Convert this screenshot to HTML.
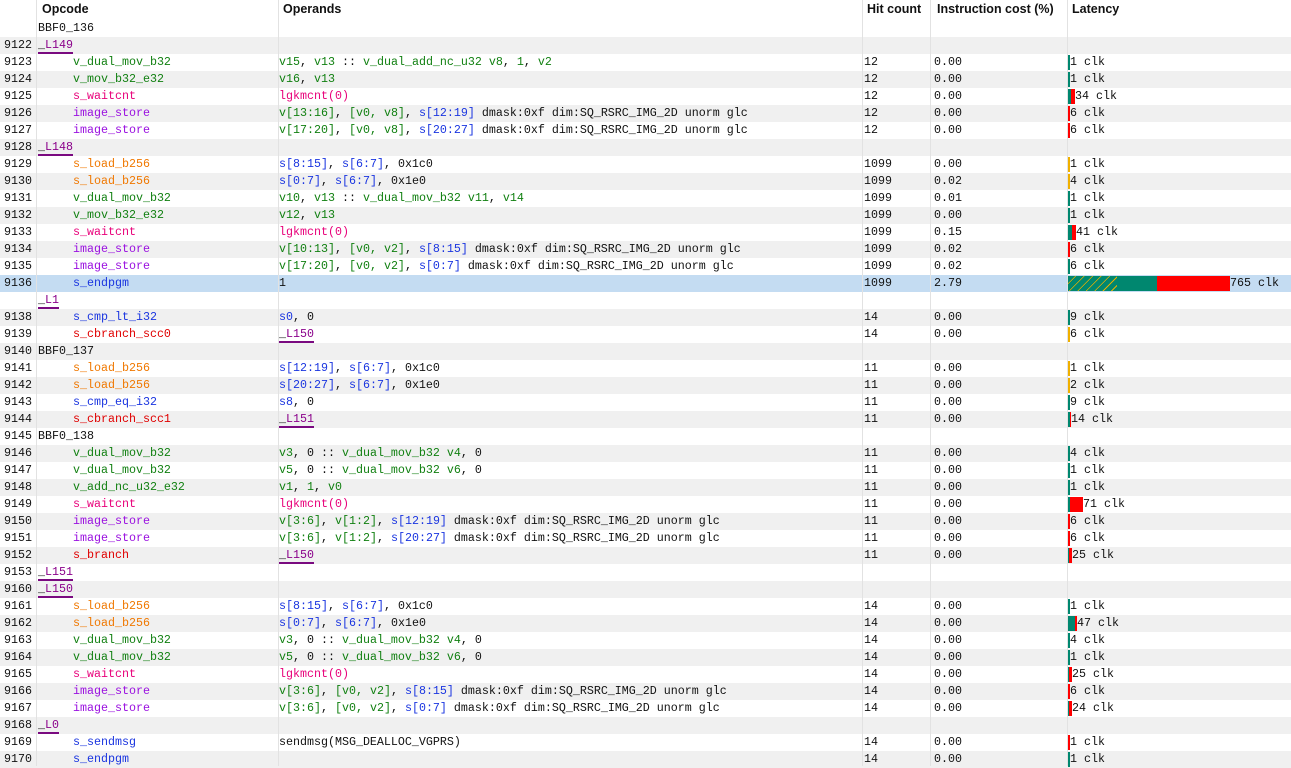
<!DOCTYPE html>
<html><head><meta charset="utf-8"><style>
*{margin:0;padding:0;box-sizing:border-box}
body{width:1291px;height:766px;overflow:hidden;background:#fff;font-family:"Liberation Mono",monospace;font-size:11.67px;color:#111;position:relative}
.hd{position:absolute;top:0;left:0;width:1291px;height:20px;font-family:"Liberation Sans",sans-serif;font-weight:bold;font-size:12.5px}
.hd span{position:absolute;top:2px}
.vl{position:absolute;top:0;height:766px;width:1px;background:#e2e2e2}
.r{position:absolute;left:0;width:1291px;height:17px;line-height:17px;white-space:pre}
.g{background:#f0f0f0}
.sel{background:#c4dcf2}
.r>span{position:absolute;top:0}
.n{left:4px}.lb{left:38px}.o{left:73px}.p{left:279px}.h{left:864px}.c{left:934px}.l{left:1068px;display:flex;align-items:center;height:17px}
.lab{border-bottom:2px solid #7a0a80;line-height:14px;display:inline-block}
.V{color:#118011}.S{color:#1a35e0}.K{color:#e8007a}.P{color:#9a10e0}.O{color:#f07800}.R{color:#e00000}.LB{color:#8a008a}
.b{display:inline-block;height:15px}
.t{background:#00876f}.rd{background:#ff0000}.y{background:#f0b000}
.hat{background:repeating-linear-gradient(135deg,#00876f 0 5px,#e8b000 5px 6px)}
</style></head><body>
<div class="hd"><span style="left:42px">Opcode</span><span style="left:283px">Operands</span><span style="left:867px">Hit count</span><span style="left:937px">Instruction cost (%)</span><span style="left:1072px">Latency</span></div>

<div class="r" style="top:20px"><span class="lb">BBF0_136</span></div>
<div class="r g" style="top:37px"><span class="n">9122</span><span class="lb"><span class="lab">_<span class="LB">L149</span></span></span></div>
<div class="r" style="top:54px"><span class="n">9123</span><span class="o V">v_dual_mov_b32</span><span class="p"><span class="V">v15</span>, <span class="V">v13</span> :: <span class="V">v_dual_add_nc_u32 v8</span>, <span class="V">1</span>, <span class="V">v2</span></span><span class="h">12</span><span class="c">0.00</span><span class="l"><i class="b t" style="width:2px"></i>1 clk</span></div>
<div class="r g" style="top:71px"><span class="n">9124</span><span class="o V">v_mov_b32_e32</span><span class="p"><span class="V">v16</span>, <span class="V">v13</span></span><span class="h">12</span><span class="c">0.00</span><span class="l"><i class="b t" style="width:2px"></i>1 clk</span></div>
<div class="r" style="top:88px"><span class="n">9125</span><span class="o K">s_waitcnt</span><span class="p K">lgkmcnt(0)</span><span class="h">12</span><span class="c">0.00</span><span class="l"><i class="b t" style="width:3px"></i><i class="b rd" style="width:4px"></i>34 clk</span></div>
<div class="r g" style="top:105px"><span class="n">9126</span><span class="o P">image_store</span><span class="p"><span class="V">v[13:16]</span>, <span class="V">[v0, v8]</span>, <span class="S">s[12:19]</span> dmask:0xf dim:SQ_RSRC_IMG_2D unorm glc</span><span class="h">12</span><span class="c">0.00</span><span class="l"><i class="b rd" style="width:2px"></i>6 clk</span></div>
<div class="r" style="top:122px"><span class="n">9127</span><span class="o P">image_store</span><span class="p"><span class="V">v[17:20]</span>, <span class="V">[v0, v8]</span>, <span class="S">s[20:27]</span> dmask:0xf dim:SQ_RSRC_IMG_2D unorm glc</span><span class="h">12</span><span class="c">0.00</span><span class="l"><i class="b rd" style="width:2px"></i>6 clk</span></div>
<div class="r g" style="top:139px"><span class="n">9128</span><span class="lb"><span class="lab">_<span class="LB">L148</span></span></span></div>
<div class="r" style="top:156px"><span class="n">9129</span><span class="o O">s_load_b256</span><span class="p"><span class="S">s[8:15]</span>, <span class="S">s[6:7]</span>, 0x1c0</span><span class="h">1099</span><span class="c">0.00</span><span class="l"><i class="b y" style="width:2px"></i>1 clk</span></div>
<div class="r g" style="top:173px"><span class="n">9130</span><span class="o O">s_load_b256</span><span class="p"><span class="S">s[0:7]</span>, <span class="S">s[6:7]</span>, 0x1e0</span><span class="h">1099</span><span class="c">0.02</span><span class="l"><i class="b y" style="width:2px"></i>4 clk</span></div>
<div class="r" style="top:190px"><span class="n">9131</span><span class="o V">v_dual_mov_b32</span><span class="p"><span class="V">v10</span>, <span class="V">v13</span> :: <span class="V">v_dual_mov_b32 v11</span>, <span class="V">v14</span></span><span class="h">1099</span><span class="c">0.01</span><span class="l"><i class="b t" style="width:2px"></i>1 clk</span></div>
<div class="r g" style="top:207px"><span class="n">9132</span><span class="o V">v_mov_b32_e32</span><span class="p"><span class="V">v12</span>, <span class="V">v13</span></span><span class="h">1099</span><span class="c">0.00</span><span class="l"><i class="b t" style="width:2px"></i>1 clk</span></div>
<div class="r" style="top:224px"><span class="n">9133</span><span class="o K">s_waitcnt</span><span class="p K">lgkmcnt(0)</span><span class="h">1099</span><span class="c">0.15</span><span class="l"><i class="b t" style="width:4px"></i><i class="b rd" style="width:4px"></i>41 clk</span></div>
<div class="r g" style="top:241px"><span class="n">9134</span><span class="o P">image_store</span><span class="p"><span class="V">v[10:13]</span>, <span class="V">[v0, v2]</span>, <span class="S">s[8:15]</span> dmask:0xf dim:SQ_RSRC_IMG_2D unorm glc</span><span class="h">1099</span><span class="c">0.02</span><span class="l"><i class="b rd" style="width:2px"></i>6 clk</span></div>
<div class="r" style="top:258px"><span class="n">9135</span><span class="o P">image_store</span><span class="p"><span class="V">v[17:20]</span>, <span class="V">[v0, v2]</span>, <span class="S">s[0:7]</span> dmask:0xf dim:SQ_RSRC_IMG_2D unorm glc</span><span class="h">1099</span><span class="c">0.02</span><span class="l"><i class="b t" style="width:2px"></i>6 clk</span></div>
<div class="r sel" style="top:275px"><span class="n">9136</span><span class="o S">s_endpgm</span><span class="p">1</span><span class="h">1099</span><span class="c">2.79</span><span class="l"><i class="b hat" style="width:49px"></i><i class="b t" style="width:40px"></i><i class="b rd" style="width:73px"></i>765 clk</span></div>
<div class="r" style="top:292px"><span class="lb"><span class="lab">_<span class="LB">L1</span></span></span></div>
<div class="r g" style="top:309px"><span class="n">9138</span><span class="o S">s_cmp_lt_i32</span><span class="p"><span class="S">s0</span>, 0</span><span class="h">14</span><span class="c">0.00</span><span class="l"><i class="b t" style="width:2px"></i>9 clk</span></div>
<div class="r" style="top:326px"><span class="n">9139</span><span class="o R">s_cbranch_scc0</span><span class="p"><span class="lab">_<span class="LB">L150</span></span></span><span class="h">14</span><span class="c">0.00</span><span class="l"><i class="b y" style="width:2px"></i>6 clk</span></div>
<div class="r g" style="top:343px"><span class="n">9140</span><span class="lb">BBF0_137</span></div>
<div class="r" style="top:360px"><span class="n">9141</span><span class="o O">s_load_b256</span><span class="p"><span class="S">s[12:19]</span>, <span class="S">s[6:7]</span>, 0x1c0</span><span class="h">11</span><span class="c">0.00</span><span class="l"><i class="b y" style="width:2px"></i>1 clk</span></div>
<div class="r g" style="top:377px"><span class="n">9142</span><span class="o O">s_load_b256</span><span class="p"><span class="S">s[20:27]</span>, <span class="S">s[6:7]</span>, 0x1e0</span><span class="h">11</span><span class="c">0.00</span><span class="l"><i class="b y" style="width:2px"></i>2 clk</span></div>
<div class="r" style="top:394px"><span class="n">9143</span><span class="o S">s_cmp_eq_i32</span><span class="p"><span class="S">s8</span>, 0</span><span class="h">11</span><span class="c">0.00</span><span class="l"><i class="b t" style="width:2px"></i>9 clk</span></div>
<div class="r g" style="top:411px"><span class="n">9144</span><span class="o R">s_cbranch_scc1</span><span class="p"><span class="lab">_<span class="LB">L151</span></span></span><span class="h">11</span><span class="c">0.00</span><span class="l"><i class="b t" style="width:2px"></i><i class="b rd" style="width:1px"></i>14 clk</span></div>
<div class="r" style="top:428px"><span class="n">9145</span><span class="lb">BBF0_138</span></div>
<div class="r g" style="top:445px"><span class="n">9146</span><span class="o V">v_dual_mov_b32</span><span class="p"><span class="V">v3</span>, 0 :: <span class="V">v_dual_mov_b32 v4</span>, 0</span><span class="h">11</span><span class="c">0.00</span><span class="l"><i class="b t" style="width:2px"></i>4 clk</span></div>
<div class="r" style="top:462px"><span class="n">9147</span><span class="o V">v_dual_mov_b32</span><span class="p"><span class="V">v5</span>, 0 :: <span class="V">v_dual_mov_b32 v6</span>, 0</span><span class="h">11</span><span class="c">0.00</span><span class="l"><i class="b t" style="width:2px"></i>1 clk</span></div>
<div class="r g" style="top:479px"><span class="n">9148</span><span class="o V">v_add_nc_u32_e32</span><span class="p"><span class="V">v1</span>, <span class="V">1</span>, <span class="V">v0</span></span><span class="h">11</span><span class="c">0.00</span><span class="l"><i class="b t" style="width:2px"></i>1 clk</span></div>
<div class="r" style="top:496px"><span class="n">9149</span><span class="o K">s_waitcnt</span><span class="p K">lgkmcnt(0)</span><span class="h">11</span><span class="c">0.00</span><span class="l"><i class="b t" style="width:2px"></i><i class="b rd" style="width:13px"></i>71 clk</span></div>
<div class="r g" style="top:513px"><span class="n">9150</span><span class="o P">image_store</span><span class="p"><span class="V">v[3:6]</span>, <span class="V">v[1:2]</span>, <span class="S">s[12:19]</span> dmask:0xf dim:SQ_RSRC_IMG_2D unorm glc</span><span class="h">11</span><span class="c">0.00</span><span class="l"><i class="b rd" style="width:2px"></i>6 clk</span></div>
<div class="r" style="top:530px"><span class="n">9151</span><span class="o P">image_store</span><span class="p"><span class="V">v[3:6]</span>, <span class="V">v[1:2]</span>, <span class="S">s[20:27]</span> dmask:0xf dim:SQ_RSRC_IMG_2D unorm glc</span><span class="h">11</span><span class="c">0.00</span><span class="l"><i class="b rd" style="width:2px"></i>6 clk</span></div>
<div class="r g" style="top:547px"><span class="n">9152</span><span class="o R">s_branch</span><span class="p"><span class="lab">_<span class="LB">L150</span></span></span><span class="h">11</span><span class="c">0.00</span><span class="l"><i class="b t" style="width:1px"></i><i class="b rd" style="width:3px"></i>25 clk</span></div>
<div class="r" style="top:564px"><span class="n">9153</span><span class="lb"><span class="lab">_<span class="LB">L151</span></span></span></div>
<div class="r g" style="top:581px"><span class="n">9160</span><span class="lb"><span class="lab">_<span class="LB">L150</span></span></span></div>
<div class="r" style="top:598px"><span class="n">9161</span><span class="o O">s_load_b256</span><span class="p"><span class="S">s[8:15]</span>, <span class="S">s[6:7]</span>, 0x1c0</span><span class="h">14</span><span class="c">0.00</span><span class="l"><i class="b t" style="width:2px"></i>1 clk</span></div>
<div class="r g" style="top:615px"><span class="n">9162</span><span class="o O">s_load_b256</span><span class="p"><span class="S">s[0:7]</span>, <span class="S">s[6:7]</span>, 0x1e0</span><span class="h">14</span><span class="c">0.00</span><span class="l"><i class="b t" style="width:7px"></i><i class="b rd" style="width:2px"></i>47 clk</span></div>
<div class="r" style="top:632px"><span class="n">9163</span><span class="o V">v_dual_mov_b32</span><span class="p"><span class="V">v3</span>, 0 :: <span class="V">v_dual_mov_b32 v4</span>, 0</span><span class="h">14</span><span class="c">0.00</span><span class="l"><i class="b t" style="width:2px"></i>4 clk</span></div>
<div class="r g" style="top:649px"><span class="n">9164</span><span class="o V">v_dual_mov_b32</span><span class="p"><span class="V">v5</span>, 0 :: <span class="V">v_dual_mov_b32 v6</span>, 0</span><span class="h">14</span><span class="c">0.00</span><span class="l"><i class="b t" style="width:2px"></i>1 clk</span></div>
<div class="r" style="top:666px"><span class="n">9165</span><span class="o K">s_waitcnt</span><span class="p K">lgkmcnt(0)</span><span class="h">14</span><span class="c">0.00</span><span class="l"><i class="b t" style="width:1px"></i><i class="b rd" style="width:3px"></i>25 clk</span></div>
<div class="r g" style="top:683px"><span class="n">9166</span><span class="o P">image_store</span><span class="p"><span class="V">v[3:6]</span>, <span class="V">[v0, v2]</span>, <span class="S">s[8:15]</span> dmask:0xf dim:SQ_RSRC_IMG_2D unorm glc</span><span class="h">14</span><span class="c">0.00</span><span class="l"><i class="b rd" style="width:2px"></i>6 clk</span></div>
<div class="r" style="top:700px"><span class="n">9167</span><span class="o P">image_store</span><span class="p"><span class="V">v[3:6]</span>, <span class="V">[v0, v2]</span>, <span class="S">s[0:7]</span> dmask:0xf dim:SQ_RSRC_IMG_2D unorm glc</span><span class="h">14</span><span class="c">0.00</span><span class="l"><i class="b t" style="width:1px"></i><i class="b rd" style="width:3px"></i>24 clk</span></div>
<div class="r g" style="top:717px"><span class="n">9168</span><span class="lb"><span class="lab">_<span class="LB">L0</span></span></span></div>
<div class="r" style="top:734px"><span class="n">9169</span><span class="o S">s_sendmsg</span><span class="p">sendmsg(MSG_DEALLOC_VGPRS)</span><span class="h">14</span><span class="c">0.00</span><span class="l"><i class="b rd" style="width:2px"></i>1 clk</span></div>
<div class="r g" style="top:751px"><span class="n">9170</span><span class="o S">s_endpgm</span><span class="p"></span><span class="h">14</span><span class="c">0.00</span><span class="l"><i class="b t" style="width:2px"></i>1 clk</span></div>

<div class="vl" style="left:36px"></div>
<div class="vl" style="left:278px"></div>
<div class="vl" style="left:862px"></div>
<div class="vl" style="left:930px"></div>
<div class="vl" style="left:1067px"></div>
</body></html>
